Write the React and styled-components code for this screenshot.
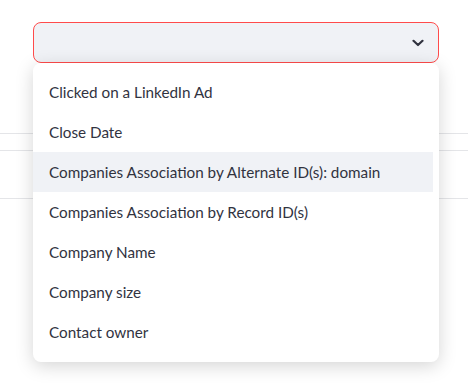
import React from "react";
import styled, { createGlobalStyle } from "styled-components";

const Global = createGlobalStyle`
  html, body { margin: 0; padding: 0; background: #fff; }
  body { font-family: "Lato", "Noto Sans", sans-serif; width: 468px; height: 385px; overflow: hidden; }
`;

const Page = styled.div`
  width: 468px;
  height: 385px;
  padding-top: 22px;
  box-sizing: border-box;
  display: flex;
  flex-direction: column;
`;

const SelectWrap = styled.div`
  position: relative;
  z-index: 2;
  margin-left: 33px;
  width: 406px;
`;

const Control = styled.div`
  box-sizing: border-box;
  height: 41px;
  background: #f0f2f6;
  border: 1px solid #ff4b4b;
  border-radius: 8px;
  display: flex;
  align-items: center;
  justify-content: flex-end;
  padding-right: 14px;
  color: #31333f;
`;

const Menu = styled.ul`
  position: absolute;
  left: 0;
  top: 41px;
  width: 406px;
  box-sizing: border-box;
  margin: 0;
  padding: 9px 6px 10px 0;
  list-style: none;
  background: #fff;
  border-radius: 8px;
  box-shadow: 0 4px 18px rgba(0, 0, 0, 0.17);
`;

const Option = styled.li`
  height: 40px;
  box-sizing: border-box;
  display: flex;
  align-items: center;
  padding: 0 0 1px 16px;
  font-size: 15.25px;
  color: #31333f;
  background: ${(p) => (p.$active ? "#f0f2f6" : "transparent")};
  white-space: nowrap;
`;

const Table = styled.div`
  margin-top: 70px;
  display: flex;
  flex-direction: column;
`;

const Row = styled.div`
  height: ${(p) => p.$h}px;
  border-top: 1px solid #e4e5e8;
  box-sizing: border-box;
`;

const options = [
  "Clicked on a LinkedIn Ad",
  "Close Date",
  "Companies Association by Alternate ID(s): domain",
  "Companies Association by Record ID(s)",
  "Company Name",
  "Company size",
  "Contact owner",
];

export default function App() {
  return (
    <Page>
      <Global />
      <SelectWrap>
        <Control>
          <svg width="12" height="8" viewBox="0 0 12 8" fill="none">
            <path d="M1.5 1.8 L6 6 L10.5 1.8" stroke="#31333f" strokeWidth="2.2" strokeLinecap="round" strokeLinejoin="round" />
          </svg>
        </Control>
        <Menu>
          {options.map((o, i) => (
            <Option key={o} $active={i === 2}>{o}</Option>
          ))}
        </Menu>
      </SelectWrap>
      <Table>
        <Row $h={17} />
        <Row $h={48} />
        <Row $h={1} />
      </Table>
    </Page>
  );
}
